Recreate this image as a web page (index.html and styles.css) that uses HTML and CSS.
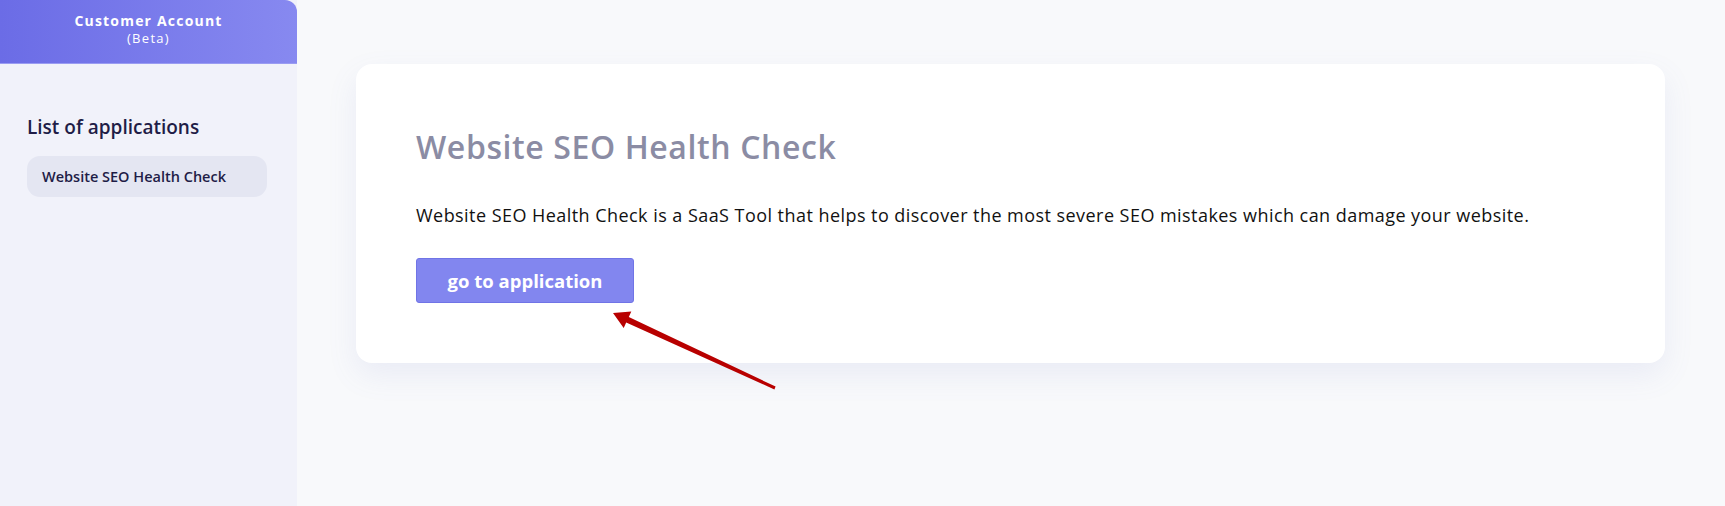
FILE: index.html
```html
<!DOCTYPE html>
<html lang="en">
<head>
<meta charset="utf-8">
<title>Customer Account</title>
<link rel="stylesheet" href="styles.css">
</head>
<body>
<div class="layout">
  <aside class="sidebar">
    <div class="sidebar-header">
      <div class="brand">Customer Account</div>
      <div class="beta">(Beta)</div>
    </div>
    <div class="sidebar-body">
      <h2 class="list-title">List of applications</h2>
      <a class="app-item">Website SEO Health Check</a>
    </div>
  </aside>
  <main class="main">
    <section class="card">
      <h1 class="card-title">Website SEO Health Check</h1>
      <p class="card-text">Website SEO Health Check is a SaaS Tool that helps to discover the most severe SEO mistakes which can damage your website.</p>
      <button class="btn">go to application</button>
    </section>
  </main>
</div>
<svg class="annotation" width="1725" height="506" viewBox="0 0 1725 506">
  <polygon fill="#b80000" points="613,313 631.3,311.5 628.8,317.0 775.6,386.6 774.4,389.4 626.2,322.4 623.7,327.9"/>
</svg>
</body>
</html>
```

FILE: styles.css
```css
* { box-sizing: border-box; }
html, body { margin: 0; padding: 0; }
body {
  font-family: "Open Sans", "DejaVu Sans", sans-serif;
  background: #f8f9fb;
  width: 1725px;
  height: 506px;
  overflow: hidden;
  position: relative;
}
.layout {
  display: flex;
  height: 506px;
}
.sidebar {
  width: 297px;
  flex: none;
  background: #f1f2fa;
  display: flex;
  flex-direction: column;
}
.sidebar-header {
  height: 64px;
  background: linear-gradient(90deg, #6b6ce6 0%, #8789f0 100%);
  border-top-right-radius: 12px;
  border-bottom: 1px solid #9a9cf2;
  color: #fff;
  text-align: center;
  padding-top: 12px;
}
.brand {
  font-size: 14px;
  font-weight: 700;
  letter-spacing: 1.2px;
  line-height: 18px;
}
.beta {
  font-size: 13px;
  line-height: 17px;
  letter-spacing: 1.3px;
}
.sidebar-body {
  padding: 51px 30px 0 27px;
}
.list-title {
  margin: 0 0 17px;
  font-size: 19px;
  font-weight: 600;
  color: #1f1d47;
  line-height: 24px;
}
.app-item {
  display: block;
  width: 240px;
  height: 41px;
  border-radius: 13px;
  background: #e4e6f2;
  color: #1f1d47;
  font-size: 14.5px;
  font-weight: 600;
  line-height: 41px;
  padding-left: 15px;
}
.main {
  flex: 1;
  padding: 64px 60px 0 59px;
}
.card {
  height: 299px;
  background: #fff;
  border-radius: 16px;
  box-shadow: 0 12px 30px rgba(110, 120, 200, 0.10);
  padding: 63px 56px 0 60px;
}
.card-title {
  margin: 0;
  font-size: 32px;
  font-weight: 600;
  color: #8b8ca4;
  line-height: 40px;
  letter-spacing: 0.6px;
}
.card-text {
  margin: 35px 0 0;
  font-size: 18px;
  color: #111;
  line-height: 26px;
  letter-spacing: 0.45px;
}
.btn {
  display: block;
  margin-top: 30px;
  width: 218px;
  height: 45px;
  background: #8286ef;
  border: 1px solid #7074e6;
  border-radius: 3px;
  color: #fff;
  font-family: inherit;
  font-size: 18.5px;
  font-weight: 700;
  padding: 0;
}
.annotation {
  position: absolute;
  left: 0;
  top: 0;
  pointer-events: none;
}
```
